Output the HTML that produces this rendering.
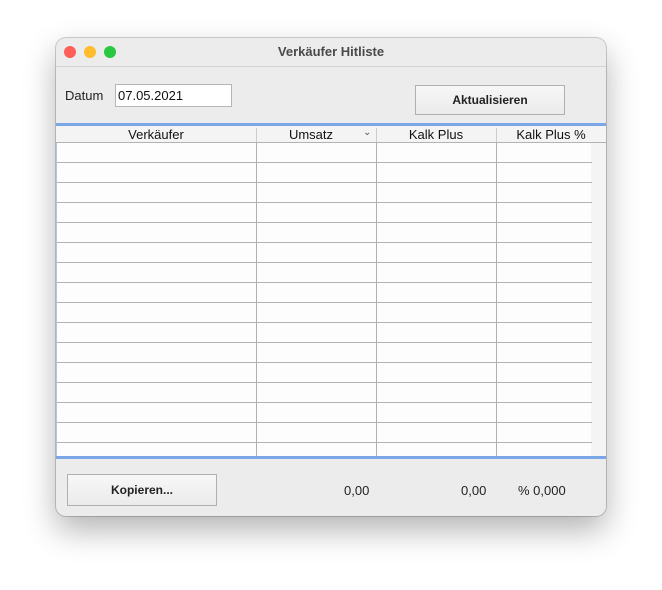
<!DOCTYPE html>
<html><head><style>
body{margin:0;width:662px;height:590px;background:#fff;position:relative;font-family:"Liberation Sans",sans-serif;overflow:hidden}
.win{position:absolute;left:56px;top:38px;width:550px;height:478px;background:#ececec;border-radius:10px;box-shadow:0 14px 32px rgba(0,0,0,.3),0 0 0 1px rgba(0,0,0,.18);overflow:hidden}
.title{position:absolute;left:0;top:0;width:550px;height:28px;border-bottom:1px solid #d4d4d4;text-align:center;font-weight:bold;font-size:13px;line-height:28px;color:#4a4a4a}
.dot{position:absolute;top:8px;width:12px;height:12px;border-radius:50%}
.a{position:absolute}
.btn{position:absolute;border:1px solid #b0b0b0;background:linear-gradient(#f7f7f7,#ebebeb);font-weight:bold;font-size:12px;text-align:center;color:#222}
.v{position:absolute;width:1px;background:#b0b0b0}
.h{position:absolute;height:1px;background:#b3b3b3;left:1px;width:535px}
.hd{position:absolute;top:89px;font-size:13px;color:#111;text-align:center}
</style></head><body>
<div class="win">
<div class="title">Verkäufer Hitliste</div>
<div class="dot" style="left:8px;background:#fe5f57"></div>
<div class="dot" style="left:28px;background:#febc2e"></div>
<div class="dot" style="left:48px;background:#28c840"></div>
<div class="a" style="left:9px;top:50px;font-size:13px;color:#222">Datum</div>
<div class="a" style="left:59px;top:46px;width:113px;height:21px;background:#fff;border:1px solid #b5b5b5;font-size:13px;line-height:21px;padding-left:2px;color:#111">07.05.2021</div>
<div class="btn" style="left:359px;top:47px;width:148px;height:28px;line-height:28px">Aktualisieren</div>
<div class="a" style="left:0;top:85px;width:550px;height:3px;background:#7aa6e6"></div>
<div class="a" style="left:0;top:88px;width:535px;height:331px;background:#fdfdfd"></div>
<div class="a" style="left:0;top:88px;width:1px;height:331px;background:#a9c6f0"></div>
<div class="a" style="left:535px;top:88px;width:15px;height:331px;background:#f4f4f4"></div>
<div class="a" style="left:0;top:88px;width:550px;height:16px;background:#f4f4f4;border-bottom:1px solid #b3b3b3"></div>
<div class="hd" style="left:0;width:200px">Verkäufer</div>
<div class="hd" style="left:200px;width:110px">Umsatz</div>
<div class="a" style="left:307px;top:89px;font-size:10px;color:#555">⌄</div>
<div class="hd" style="left:320px;width:120px">Kalk Plus</div>
<div class="hd" style="left:440px;width:110px">Kalk Plus %</div>
<div class="v" style="left:200px;top:90px;height:14px;background:#ccc"></div>
<div class="v" style="left:320px;top:90px;height:14px;background:#ccc"></div>
<div class="v" style="left:440px;top:90px;height:14px;background:#ccc"></div>
<div class="v" style="left:200px;top:105px;height:314px"></div>
<div class="v" style="left:320px;top:105px;height:314px"></div>
<div class="v" style="left:440px;top:105px;height:314px"></div>
<div class="h" style="top:124px"></div><div class="h" style="top:144px"></div><div class="h" style="top:164px"></div><div class="h" style="top:184px"></div><div class="h" style="top:204px"></div><div class="h" style="top:224px"></div><div class="h" style="top:244px"></div><div class="h" style="top:264px"></div><div class="h" style="top:284px"></div><div class="h" style="top:304px"></div><div class="h" style="top:324px"></div><div class="h" style="top:344px"></div><div class="h" style="top:364px"></div><div class="h" style="top:384px"></div><div class="h" style="top:404px"></div>
<div class="a" style="left:0;top:418px;width:550px;height:3px;background:#7aa6e6"></div>
<div class="btn" style="left:11px;top:436px;width:148px;height:30px;line-height:30px">Kopieren...</div>
<div class="a" style="left:288px;top:445px;font-size:13px;color:#222">0,00</div>
<div class="a" style="left:405px;top:445px;font-size:13px;color:#222">0,00</div>
<div class="a" style="left:462px;top:445px;font-size:13px;color:#222">% 0,000</div>
</div>
</body></html>
